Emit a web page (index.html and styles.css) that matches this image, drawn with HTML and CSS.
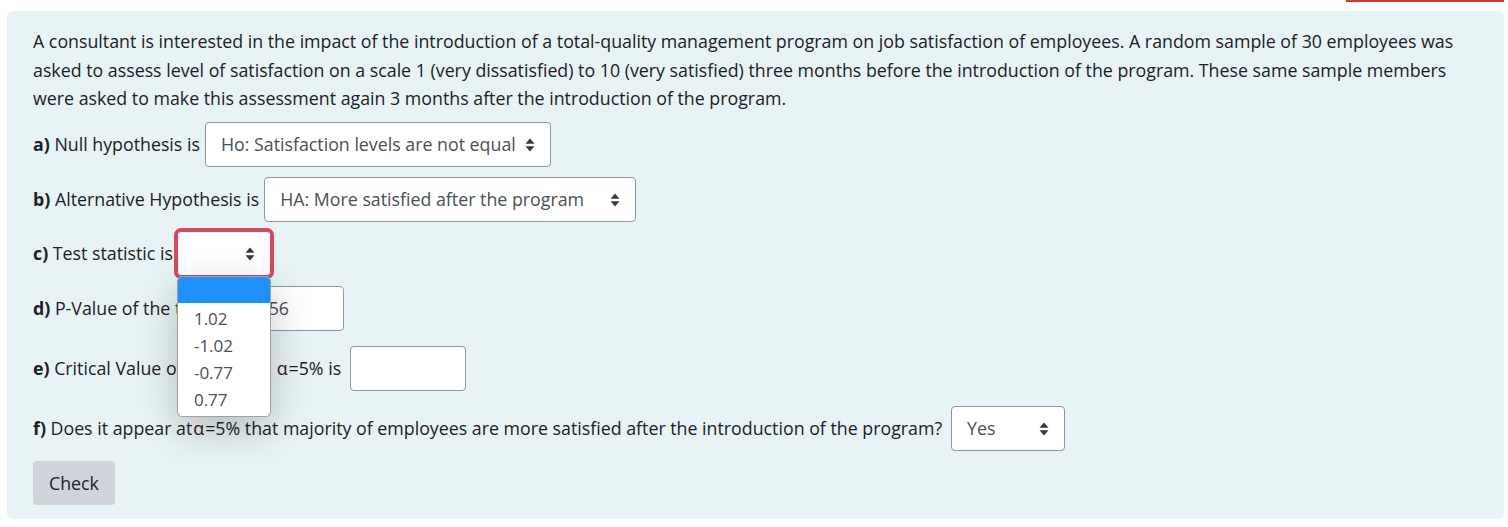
FILE: index.html
```html
<!DOCTYPE html>
<html>
<head>
<meta charset="utf-8">
<link rel="stylesheet" href="styles.css">
</head>
<body>
<div class="topbar"><div class="redline"></div></div>
<div class="que">
  <div class="formulation">
    <p class="qtext">A consultant is interested in the impact of the introduction of a total-quality management program on job satisfaction of employees. A random sample of 30 employees was asked to assess level of satisfaction on a scale 1 (very dissatisfied) to 10 (very satisfied) three months before the introduction of the program. These same sample members were asked to make this assessment again 3 months after the introduction of the program.</p>

    <div class="row row-a">
      <span class="label"><b>a)</b> Null hypothesis is</span>
      <div class="select sel-a"><span class="val">Ho: Satisfaction levels are not equal</span><svg class="arr" viewBox="0 0 10 14"><path d="M5 0.5 L9.5 5.8 H0.5 Z M5 13.5 L9.5 8.2 H0.5 Z" fill="#343a40"/></svg></div>
    </div>

    <div class="row row-b">
      <span class="label"><b>b)</b> Alternative Hypothesis is</span>
      <div class="select sel-b"><span class="val">HA: More satisfied after the program</span><svg class="arr" viewBox="0 0 10 14"><path d="M5 0.5 L9.5 5.8 H0.5 Z M5 13.5 L9.5 8.2 H0.5 Z" fill="#343a40"/></svg></div>
    </div>

    <div class="row row-c">
      <span class="label"><b>c)</b> Test statistic is</span>
      <div class="select sel-c focus"><span class="val"></span><svg class="arr" viewBox="0 0 10 14"><path d="M5 0.5 L9.5 5.8 H0.5 Z M5 13.5 L9.5 8.2 H0.5 Z" fill="#343a40"/></svg>
        <div class="dropdown">
          <div class="opt sel"></div>
          <div class="opt">1.02</div>
          <div class="opt">-1.02</div>
          <div class="opt">-0.77</div>
          <div class="opt">0.77</div>
        </div>
      </div>
    </div>

    <div class="row row-d">
      <span class="label"><b>d)</b> P-Value of the test is</span>
      <div class="input inp-d">0.156</div>
    </div>

    <div class="row row-e">
      <span class="label"><b>e)</b> Critical Value of the test at <span class="alpha">α</span>=5% is</span>
      <div class="input inp-e"></div>
    </div>

    <div class="row row-f">
      <span class="label"><b>f)</b> Does it appear at<span class="alpha">α</span>=5% that majority of employees are more satisfied after the introduction of the program?</span>
      <div class="select sel-f"><span class="val">Yes</span><svg class="arr" viewBox="0 0 10 14"><path d="M5 0.5 L9.5 5.8 H0.5 Z M5 13.5 L9.5 8.2 H0.5 Z" fill="#343a40"/></svg></div>
    </div>

    <button class="check">Check</button>
  </div>
</div>
</body>
</html>
```

FILE: styles.css
```css
html, body {
  margin: 0;
  padding: 0;
  background: #ffffff;
}
body {
  font-family: "Open Sans", "Noto Sans", sans-serif;
  font-size: 17.8px;
  color: #1d2125;
  width: 1508px;
  height: 527px;
  overflow: hidden;
}
.topbar {
  height: 2px;
  display: flex;
  justify-content: flex-end;
  padding-right: 4px;
}
.redline {
  width: 158px;
  height: 2px;
  background: #d63a2a;
}
.que {
  padding: 9px 4px 8px 7px;
}
.formulation {
  background: #e7f3f5;
  border-radius: 6px;
  height: 508px;
  box-sizing: border-box;
  padding: 16px 20px 0 26px;
}
.qtext {
  margin: 0;
  line-height: 28.5px;
  width: 1440px;
}
.row {
  display: flex;
  align-items: center;
  height: 45px;
  white-space: nowrap;
}
.row-a { margin-top: 9px; }
.row-b { margin-top: 10px; }
.row-c { margin-top: 9px; }
.row-d { margin-top: 10px; }
.row-e { margin-top: 15px; }
.row-f { margin-top: 15px; }
.label b { font-weight: 700; }
.select, .input {
  position: relative;
  height: 45px;
  box-sizing: border-box;
  background: #fff;
  border: 1px solid #8f959e;
  border-radius: 4px;
  color: #495057;
  display: flex;
  align-items: center;
  padding-left: 15px;
  margin-left: 5px;
}
.arr {
  position: absolute;
  right: 15px;
  top: 15px;
  width: 10px;
  height: 14px;
}
.sel-a { width: 346px; }
.sel-b { width: 372px; }
.sel-c {
  width: 94px;
  margin-left: 4px;
  border-color: #d9485d;
  box-shadow: 0 0 0 3px #d9485d;
}
.sel-f { width: 114px; margin-left: 9px; }
.inp-d { width: 116px; margin-left: 4px; }
.inp-e { width: 116px; margin-left: 9px; }
.alpha {
  background: #eef0f0;
  padding: 0 1px;
}
.dropdown {
  position: absolute;
  left: -1px;
  top: 44px;
  width: 92px;
  background: #fff;
  border: 1px solid #a0a0a0;
  border-radius: 5px;
  overflow: hidden;
  box-shadow: 0 12px 40px rgba(0, 0, 0, 0.22);
  z-index: 5;
  padding-bottom: 3px;
}
.opt {
  height: 27px;
  line-height: 27px;
  padding-left: 16px;
  color: #495057;
  font-size: 17px;
}
.opt.sel {
  background: #1e90ff;
  height: 26px;
}
.opt:nth-child(2) { margin-top: 2px; }
.check {
  display: block;
  margin-top: 10px;
  width: 82px;
  height: 44px;
  border: none;
  border-radius: 4px;
  background: #ced4da;
  color: #1d2125;
  font-family: inherit;
  font-size: 17.8px;
}
```
